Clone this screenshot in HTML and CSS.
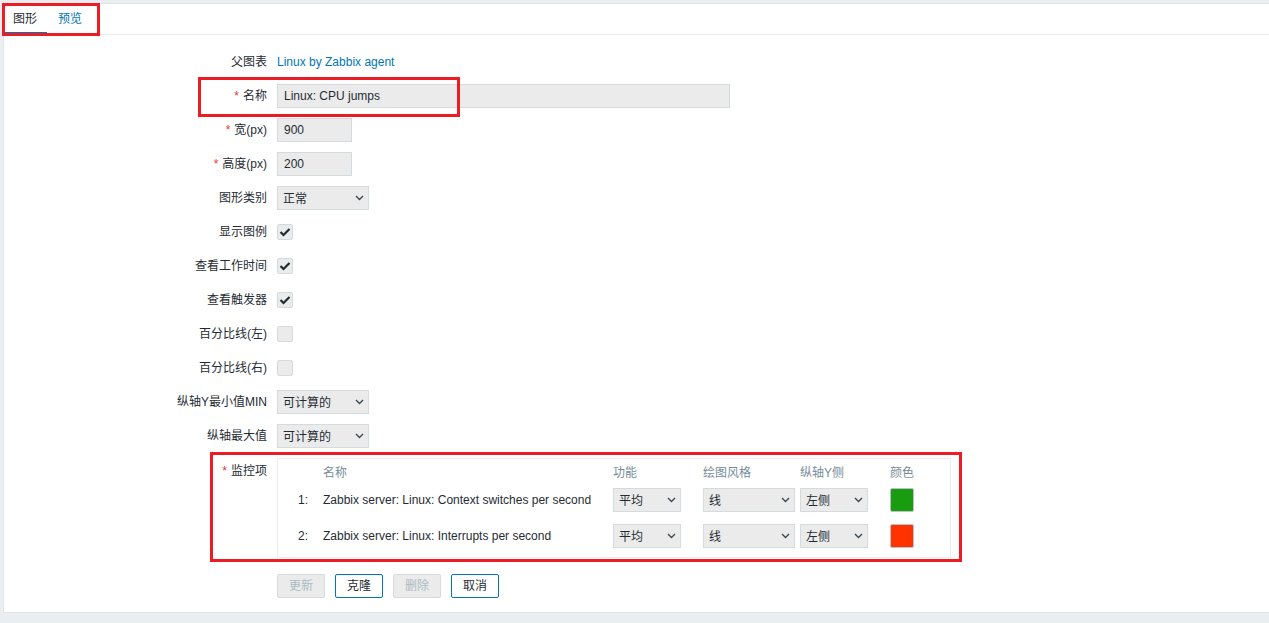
FILE: index.html
```html
<!DOCTYPE html>
<html lang="zh-CN">
<head>
<meta charset="utf-8">
<title>图形</title>
<link rel="stylesheet" href="styles.css">
</head>
<body>
<div class="screen">
  <div class="panel">
    <div class="tabs">
      <div class="tab tab-active">图形</div>
      <div class="tab tab-link">预览</div>
    </div>
    <div class="form">
      <div class="row">
        <div class="label">父图表</div>
        <div class="value"><a class="link">Linux by Zabbix agent</a></div>
      </div>
      <div class="row">
        <div class="label"><span class="req">*</span>名称</div>
        <div class="value"><div class="input input-name">Linux: CPU jumps</div></div>
      </div>
      <div class="row">
        <div class="label"><span class="req">*</span>宽(px)</div>
        <div class="value"><div class="input input-small">900</div></div>
      </div>
      <div class="row">
        <div class="label"><span class="req">*</span>高度(px)</div>
        <div class="value"><div class="input input-small">200</div></div>
      </div>
      <div class="row">
        <div class="label">图形类别</div>
        <div class="value"><div class="select sel-92"><span>正常</span><svg class="chev" width="9" height="6" viewBox="0 0 9 6"><path d="M1 1 L4.5 4.5 L8 1"/></svg></div></div>
      </div>
      <div class="row">
        <div class="label">显示图例</div>
        <div class="value"><div class="check"><svg width="14" height="14" viewBox="0 0 14 14"><path d="M2.5 7 L5.5 10 L11.5 4"/></svg></div></div>
      </div>
      <div class="row">
        <div class="label">查看工作时间</div>
        <div class="value"><div class="check"><svg width="14" height="14" viewBox="0 0 14 14"><path d="M2.5 7 L5.5 10 L11.5 4"/></svg></div></div>
      </div>
      <div class="row">
        <div class="label">查看触发器</div>
        <div class="value"><div class="check"><svg width="14" height="14" viewBox="0 0 14 14"><path d="M2.5 7 L5.5 10 L11.5 4"/></svg></div></div>
      </div>
      <div class="row">
        <div class="label">百分比线(左)</div>
        <div class="value"><div class="check"></div></div>
      </div>
      <div class="row">
        <div class="label">百分比线(右)</div>
        <div class="value"><div class="check"></div></div>
      </div>
      <div class="row">
        <div class="label">纵轴Y最小值MIN</div>
        <div class="value"><div class="select sel-92"><span>可计算的</span><svg class="chev" width="9" height="6" viewBox="0 0 9 6"><path d="M1 1 L4.5 4.5 L8 1"/></svg></div></div>
      </div>
      <div class="row">
        <div class="label">纵轴最大值</div>
        <div class="value"><div class="select sel-92"><span>可计算的</span><svg class="chev" width="9" height="6" viewBox="0 0 9 6"><path d="M1 1 L4.5 4.5 L8 1"/></svg></div></div>
      </div>
      <div class="row row-top">
        <div class="label label-top"><span class="req">*</span>监控项</div>
        <div class="value">
          <div class="items">
            <div class="irow ihead">
              <div class="c-num"></div>
              <div class="c-name">名称</div>
              <div class="c-func">功能</div>
              <div class="c-style">绘图风格</div>
              <div class="c-axis">纵轴Y侧</div>
              <div class="c-color">颜色</div>
            </div>
            <div class="irow idata">
              <div class="c-num">1:</div>
              <div class="c-name">Zabbix server: Linux: Context switches per second</div>
              <div class="c-func"><div class="select sel-68"><span>平均</span><svg class="chev" width="9" height="6" viewBox="0 0 9 6"><path d="M1 1 L4.5 4.5 L8 1"/></svg></div></div>
              <div class="c-style"><div class="select sel-92"><span>线</span><svg class="chev" width="9" height="6" viewBox="0 0 9 6"><path d="M1 1 L4.5 4.5 L8 1"/></svg></div></div>
              <div class="c-axis"><div class="select sel-68"><span>左侧</span><svg class="chev" width="9" height="6" viewBox="0 0 9 6"><path d="M1 1 L4.5 4.5 L8 1"/></svg></div></div>
              <div class="c-color"><div class="swatch sw-green"></div></div>
            </div>
            <div class="irow idata">
              <div class="c-num">2:</div>
              <div class="c-name">Zabbix server: Linux: Interrupts per second</div>
              <div class="c-func"><div class="select sel-68"><span>平均</span><svg class="chev" width="9" height="6" viewBox="0 0 9 6"><path d="M1 1 L4.5 4.5 L8 1"/></svg></div></div>
              <div class="c-style"><div class="select sel-92"><span>线</span><svg class="chev" width="9" height="6" viewBox="0 0 9 6"><path d="M1 1 L4.5 4.5 L8 1"/></svg></div></div>
              <div class="c-axis"><div class="select sel-68"><span>左侧</span><svg class="chev" width="9" height="6" viewBox="0 0 9 6"><path d="M1 1 L4.5 4.5 L8 1"/></svg></div></div>
              <div class="c-color"><div class="swatch sw-red"></div></div>
            </div>
          </div>
        </div>
      </div>
      <div class="buttons">
        <button class="btn btn-disabled">更新</button>
        <button class="btn">克隆</button>
        <button class="btn btn-disabled">删除</button>
        <button class="btn">取消</button>
      </div>
    </div>
  </div>
  <div class="mark mark-tabs"></div>
  <div class="mark mark-name"></div>
  <div class="mark mark-items"></div>
</div>
</body>
</html>
```

FILE: styles.css
```css
* { box-sizing: border-box; }

html, body {
  margin: 0;
  padding: 0;
}

body {
  background: #ebeef0;
  font-family: "Liberation Sans", Arial, "Noto Sans CJK SC", sans-serif;
  font-size: 12px;
  color: #1f2c33;
}

.screen {
  position: relative;
  width: 1269px;
  height: 623px;
  overflow: hidden;
}

.panel {
  margin: 3px 0 0 3px;
  height: 610px;
  background: #ffffff;
  border-top: 1px solid #dfe4e7;
  border-left: 1px solid #dfe4e7;
  border-bottom: 1px solid #dfe4e7;
}

.tabs {
  display: flex;
  height: 31px;
  border-bottom: 1px solid #ebeef0;
  padding-left: 1px;
}

.tab {
  height: 30px;
  line-height: 28px;
  padding: 1px 10px 0 8px;
  border-bottom: 2px solid transparent;
}

.tab-active {
  border-bottom-color: #0275b8;
  color: #1f2c33;
}

.tab-link {
  color: #0275b8;
  margin-left: 1px;
  padding: 1px 10px 0;
}

.form {
  padding-top: 10px;
}

.row {
  display: flex;
  align-items: center;
  padding: 5px 0;
  min-height: 34px;
}

.row-top {
  align-items: flex-start;
}

.label {
  width: 263px;
  text-align: right;
  line-height: 24px;
  white-space: nowrap;
}

.label-top {
  padding-top: 1px;
}

.req {
  color: #e33734;
  margin-right: 4px;
}

.value {
  margin-left: 10px;
  line-height: 24px;
}

.link {
  color: #0275b8;
  text-decoration: none;
}

.input {
  height: 24px;
  line-height: 22px;
  background: #ebebeb;
  border: 1px solid #d3dbdf;
  padding: 0 5px 0 6px;
  white-space: nowrap;
}

.input-name { width: 453px; }
.input-small { width: 75px; }

.select {
  display: flex;
  align-items: center;
  justify-content: space-between;
  height: 24px;
  line-height: 22px;
  background: #ebebeb;
  border: 1px solid #d3dbdf;
  padding: 0 4px 0 5px;
  white-space: nowrap;
}

.select span { padding-top: 1px; }

.sel-92 { width: 92px; }
.sel-68 { width: 68px; }

.chev path {
  fill: none;
  stroke: #3b4a52;
  stroke-width: 1.4;
}

.check {
  width: 16px;
  height: 16px;
  margin: 4px 0;
  background: #ebebeb;
  border: 1px solid #d3dbdf;
  border-radius: 2px;
  display: flex;
  align-items: center;
  justify-content: center;
}

.check svg path {
  fill: none;
  stroke: #1f2c33;
  stroke-width: 2.2;
}

.items {
  width: 674px;
  border: 1px solid #ebeef0;
}

.irow {
  display: flex;
}

.ihead {
  height: 26px;
  padding-top: 2px;
  line-height: 24px;
  color: #768d99;
}

.idata {
  height: 36px;
  padding-top: 3px;
  line-height: 24px;
}

.c-num { width: 45px; text-align: right; padding-right: 15px; }
.c-name { width: 290px; white-space: nowrap; }
.c-func { width: 90px; }
.c-style { width: 97px; }
.c-axis { width: 90px; }
.c-color { flex: 1; }

.swatch {
  width: 24px;
  height: 24px;
  border: 1px solid #b8c2c7;
  border-radius: 2px;
}

.sw-green { background: #1a9c11; }
.sw-red { background: #ff3300; }

.buttons {
  display: flex;
  gap: 10px;
  padding: 11px 0 0 273px;
}

.btn {
  height: 24px;
  width: 48px;
  padding: 0;
  font-family: "Liberation Sans", Arial, "Noto Sans CJK SC", sans-serif;
  font-size: 12px;
  line-height: 22px;
  background: #ffffff;
  border: 1px solid #0275b8;
  border-radius: 2px;
  color: #1f2c33;
}

.btn-disabled {
  background: #ebebeb;
  border-color: #d3dbdf;
  color: #acbbc2;
}

.mark {
  position: absolute;
  border: 3px solid #ed1c24;
}

.mark-tabs { left: 2px; top: 3px; width: 98px; height: 33px; }
.mark-name { left: 198px; top: 77px; width: 262px; height: 40px; }
.mark-items { left: 210px; top: 452px; width: 752px; height: 110px; }
```
